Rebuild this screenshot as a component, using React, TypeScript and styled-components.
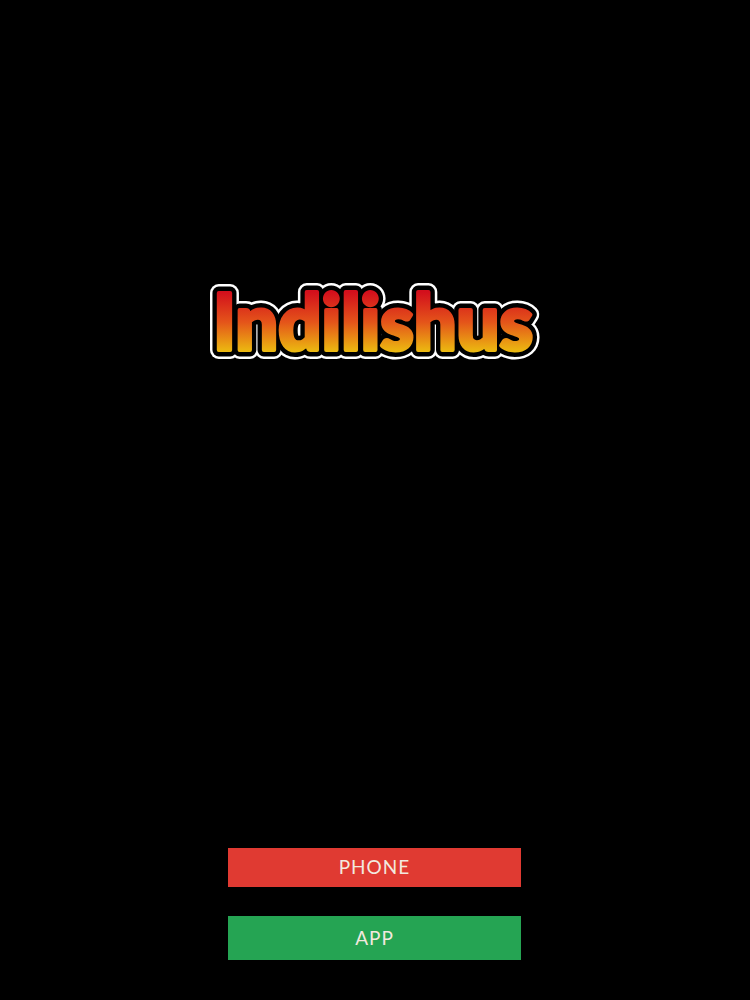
import React from "react";
import styled, { createGlobalStyle } from "styled-components";

const GlobalStyle = createGlobalStyle`
  html, body {
    margin: 0;
    padding: 0;
    background: #000;
  }
`;

const LogoLabel = "Indilishus";

const Logo = () => (
  <LogoSvg viewBox="0 0 340 100" width="340" height="100">
    <defs>
      <linearGradient id="fire" gradientUnits="userSpaceOnUse" x1="0" y1="21" x2="0" y2="81">
        <stop offset="0" stopColor="#d30f1c" />
        <stop offset="0.5" stopColor="#e4541a" />
        <stop offset="1" stopColor="#ecbb10" />
      </linearGradient>
    </defs>
    <LogoText x="8" y="79" textLength="320" lengthAdjust="spacingAndGlyphs" stroke="#fff" strokeWidth="18" />
    <LogoText x="8" y="79" textLength="320" lengthAdjust="spacingAndGlyphs" stroke="#000" strokeWidth="13" />
    <LogoText
      x="8"
      y="79"
      textLength="320"
      lengthAdjust="spacingAndGlyphs"
      fill="url(#fire)"
      stroke="url(#fire)"
      strokeWidth="4"
    />
  </LogoSvg>
);

const App = () => {
  return (
    <>
      <GlobalStyle />
      <Page>
        <Logo />
        <Buttons>
          <PhoneButton>PHONE</PhoneButton>
          <AppButton>APP</AppButton>
        </Buttons>
      </Page>
    </>
  );
};

export default App;

const Page = styled.div`
  width: 750px;
  height: 1000px;
  box-sizing: border-box;
  padding: 271px 0 40px;
  background: #000;
  display: flex;
  flex-direction: column;
  align-items: center;
`;

const LogoSvg = styled.svg`
  display: block;
`;

const LogoText = styled.text.attrs({ children: LogoLabel })`
  font-family: Lato, "Liberation Sans", sans-serif;
  font-weight: 900;
  font-size: 78px;
  stroke-linejoin: round;
`;

const Buttons = styled.div`
  margin-top: auto;
  margin-right: 1px;
  width: 293px;
  display: flex;
  flex-direction: column;
  gap: 29px;
`;

const BaseButton = styled.div`
  display: flex;
  align-items: center;
  justify-content: center;
  padding-bottom: 2px;
  box-sizing: border-box;
  color: #f2e9df;
  font-family: Lato, "Liberation Sans", sans-serif;
  font-size: 19px;
  letter-spacing: 1px;
`;

const PhoneButton = styled(BaseButton)`
  height: 39px;
  background: #e03a32;
`;

const AppButton = styled(BaseButton)`
  height: 44px;
  background: #25a453;
`;
